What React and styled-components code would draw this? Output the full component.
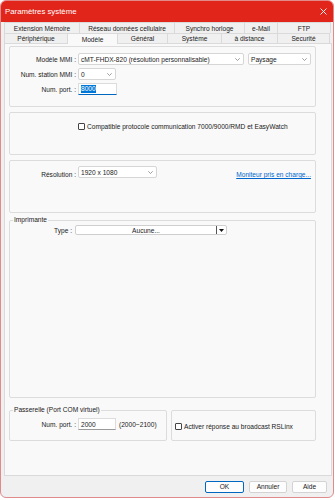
import React from "react";
import styled, { createGlobalStyle } from "styled-components";

const Global = createGlobalStyle`
	* { box-sizing: border-box; }
	body {
		margin: 0;
		background: #ffffff;
		font-family: "Liberation Sans", Arial, sans-serif;
		font-size: 6.6px;
		color: #1a1a1a;
	}
`;

const Window = styled.div`
	width: 334px;
	height: 498px;
	border: 1px solid #e08a8c;
	border-radius: 6px;
	overflow: hidden;
	background: #f0f0f0;
	display: flex;
	flex-direction: column;
`;

const TitleBar = styled.div`
	height: 21px;
	flex: none;
	background: #e1251b;
	color: #ffffff;
	display: flex;
	align-items: center;
	justify-content: space-between;
	padding: 0 6px 0 4px;
	font-size: 7.8px;
`;

const TabRow = styled.div`
	display: flex;
	margin-left: 4px;
	height: ${p => p.$h}px;
`;

const Tab = styled.div`
	width: ${p => p.$w}px;
	display: flex;
	align-items: center;
	justify-content: center;
	border: 1px solid #dadada;
	border-bottom: none;
	margin-left: -1px;
	background: ${p => (p.$active ? "#f9f9f9" : "#f0f0f0")};
	color: #222;
	position: relative;
	z-index: ${p => (p.$active ? 2 : 1)};
	white-space: nowrap;
	${p => p.$active && "margin-bottom: -1px; height: 11px;"}
`;

const Panel = styled.div`
	margin-left: 3px;
	width: 328px;
	height: 433px;
	flex: none;
	border: 1px solid #dadada;
	background: #f9f9f9;
	padding: 2px 0 0 4px;
	display: flex;
	flex-direction: column;
	position: relative;
	z-index: 1;
`;

const Group = styled.div`
	width: ${p => p.$w || 307}px;
	height: ${p => p.$h}px;
	margin-top: ${p => p.$mt || 0}px;
	border: 1px solid #dcdcdc;
	border-radius: 2px;
	padding: ${p => p.$pad || "0"};
	display: flex;
	flex-direction: column;
	gap: 3px;
	position: relative;
	flex: none;
`;

const Legend = styled.span`
	position: absolute;
	top: -5px;
	left: 3px;
	padding: 0 1px;
	background: #f9f9f9;
	line-height: 8px;
	white-space: nowrap;
`;

const Row = styled.div`
	display: flex;
	align-items: ${p => p.$align || "center"};
	height: ${p => p.$h || 12}px;
	white-space: nowrap;
`;

const Label = styled.span`
	width: ${p => p.$w || 66}px;
	text-align: right;
	margin-right: ${p => p.$mr || 2}px;
	flex: none;
	white-space: nowrap;
`;

const SelectBox = styled.div`
	width: ${p => p.$w}px;
	height: ${p => p.$h || 12}px;
	margin-left: ${p => p.$ml || 0}px;
	background: #ffffff;
	border: 1px solid #d6d6d6;
	border-radius: 2px;
	display: flex;
	align-items: center;
	justify-content: space-between;
	padding: 0 3px 0 2px;
	white-space: nowrap;
	overflow: hidden;
	flex: none;
`;

const Input = styled.div`
	width: ${p => p.$w}px;
	height: 12px;
	background: #ffffff;
	border: 1px solid #dcdcdc;
	border-bottom: 1px solid ${p => (p.$focus ? "#0067c0" : "#9a9a9a")};
	display: flex;
	align-items: center;
	padding-left: 2px;
	flex: none;
`;

const Selected = styled.span`
	background: #0078d7;
	color: #ffffff;
	line-height: 8px;
`;

const Check = styled.span`
	width: 7px;
	height: 7px;
	flex: none;
	border: 1px solid #444;
	border-radius: 1px;
	background: #fff;
	margin-right: 2px;
`;

const Link = styled.a`
	margin-left: auto;
	margin-right: 4px;
	color: #0066cc;
	text-decoration: underline;
	cursor: pointer;
`;

const Combo = styled.div`
	width: 152px;
	height: 10px;
	background: #fff;
	border: 1px solid #cfcfcf;
	border-radius: 2px;
	display: flex;
	align-items: center;
`;

const ComboText = styled.span`
	flex: 1;
	text-align: center;
`;

const ComboArrow = styled.span`
	width: 10px;
	height: 100%;
	border-left: 1px solid #555;
	display: flex;
	align-items: center;
	justify-content: center;
`;

const BottomRow = styled.div`
	display: flex;
	gap: 4px;
	margin-top: 12px;
`;

const Hint = styled.span`
	margin-left: 3px;
`;

const Footer = styled.div`
	flex: 1;
	display: flex;
	align-items: center;
	justify-content: flex-end;
	gap: 5px;
	padding: 0 6px 0 0;
`;

const Button = styled.div`
	width: ${p => p.$w}px;
	height: 12px;
	background: #fdfdfd;
	border: 1px solid ${p => (p.$primary ? "#0067c0" : "#d3d3d3")};
	border-radius: 2px;
	display: flex;
	align-items: center;
	justify-content: center;
`;

const Chevron = () => (
	<svg width="5" height="3" viewBox="0 0 5 3">
		<path d="M0.3 0.3 L2.5 2.5 L4.7 0.3" fill="none" stroke="#777" strokeWidth="0.7" />
	</svg>
);

const CloseIcon = () => (
	<svg width="7" height="7" viewBox="0 0 7 7">
		<path d="M0.5 0.5 L6.5 6.5 M6.5 0.5 L0.5 6.5" stroke="#fff" strokeWidth="0.9" />
	</svg>
);

const row1 = [
	["Extension Mémoire", 76],
	["Réseau données cellulaire", 96],
	["Synchro horloge", 71],
	["e-Mail", 34],
	["FTP", 54],
];

const row2 = [
	["Périphérique", 64],
	["Modèle", 51, true],
	["Général", 51],
	["Système", 55],
	["à distance", 57],
	["Securité", 53],
];

const App = () => (
	<>
		<Global />
		<Window>
			<TitleBar>
				<span>Paramètres système</span>
				<CloseIcon />
			</TitleBar>
			<TabRow $h={11}>
				{row1.map(([t, w]) => <Tab key={t} $w={w}>{t}</Tab>)}
			</TabRow>
			<TabRow $h={10}>
				{row2.map(([t, w, a]) => <Tab key={t} $w={w} $active={a}>{t}</Tab>)}
			</TabRow>
			<Panel>
				<Group $h={61} $pad="6px 0 0 0">
					<Row>
						<Label>Modèle MMI :</Label>
						<SelectBox $w={166}>cMT-FHDX-820 (résolution personnalisable)<Chevron /></SelectBox>
						<SelectBox $w={63} $ml={4}>Paysage<Chevron /></SelectBox>
					</Row>
					<Row>
						<Label>Num. station MMI :</Label>
						<SelectBox $w={38}>0<Chevron /></SelectBox>
					</Row>
					<Row>
						<Label>Num. port. :</Label>
						<Input $w={39} $focus><Selected>8000</Selected></Input>
					</Row>
				</Group>

				<Group $h={43} $mt={5} $pad="9px 0 0 68px">
					<Row $h={8}>
						<Check />
						Compatible protocole communication 7000/9000/RMD et EasyWatch
					</Row>
				</Group>

				<Group $h={53} $mt={5} $pad="5px 0 0 0">
					<Row $align="flex-end">
						<Label>Résolution :</Label>
						<SelectBox $w={79}>1920 x 1080<Chevron /></SelectBox>
						<Link>Moniteur pris en charge...</Link>
					</Row>
				</Group>

				<Group $h={178} $mt={7} $pad="4px 0 0 0">
					<Legend>Imprimante</Legend>
					<Row $h={10}>
						<Label $w={62} $mr={3}>Type :</Label>
						<Combo>
							<ComboText>Aucune...</ComboText>
							<ComboArrow>
								<svg width="5" height="3" viewBox="0 0 5 3">
									<path d="M0 0 L5 0 L2.5 3 Z" fill="#111" />
								</svg>
							</ComboArrow>
						</Combo>
					</Row>
				</Group>

				<BottomRow>
					<Group $w={158} $h={31} $pad="7px 0 0 0">
						<Legend>Passerelle (Port COM virtuel)</Legend>
						<Row>
							<Label>Num. port. :</Label>
							<Input $w={38}>2000</Input>
							<Hint>(2000~2100)</Hint>
						</Row>
					</Group>
					<Group $w={145} $h={31} $pad="11px 0 0 3px">
						<Row $h={8}>
							<Check />
							Activer réponse au broadcast RSLinx
						</Row>
					</Group>
				</BottomRow>
			</Panel>
			<Footer>
				<Button $w={39} $primary>OK</Button>
				<Button $w={38}>Annuler</Button>
				<Button $w={35}>Aide</Button>
			</Footer>
		</Window>
	</>
);

export default App;
